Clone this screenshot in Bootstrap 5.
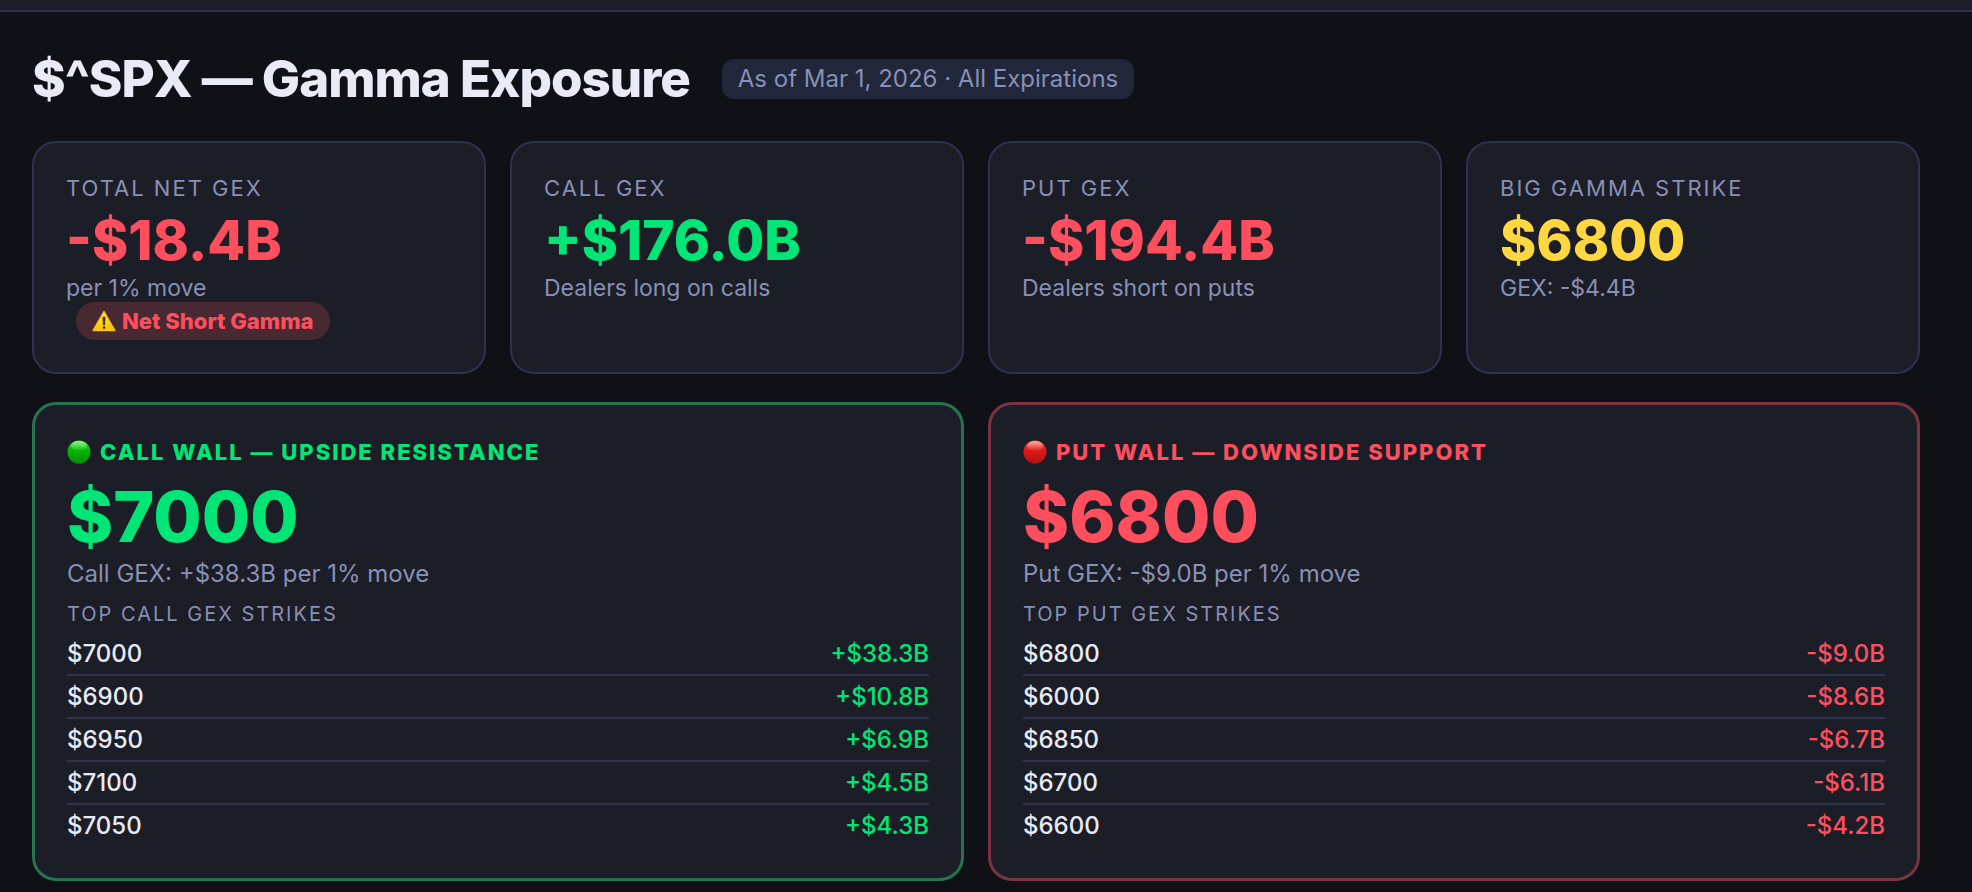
<!DOCTYPE html>
<html lang="en" data-bs-theme="dark">
<head>
<meta charset="utf-8">
<meta name="viewport" content="width=device-width, initial-scale=1">
<title>$^SPX — Gamma Exposure</title>
<link href="https://cdn.jsdelivr.net/npm/bootstrap@5.3.0/dist/css/bootstrap.min.css" rel="stylesheet">
<style>
  :root { --line: #2d3250; --panel: #1c1e27; --muted: #8890b5; --up: #00e676; --down: #ff4f5e; --gold: #ffd740; }
  body { background: #101116; color: #e8eaf6; font-family: Inter, "Liberation Sans", sans-serif; }
  .topbar { height: 12px; background: var(--panel); border-bottom: 2px solid var(--line); }
  .page { padding: 37px 52px 10px 32px; }
  .page-title { font-size: 51px; line-height: 60px; font-weight: 800; letter-spacing: -1px; color: #e8eaf6; }
  .asof { font-size: 24px; line-height: 32px; padding: 4px 16px; border-radius: 12px; background: #22263a; color: var(--muted); }
  .page-head { gap: 32px; margin-bottom: 32px; }
  .panel { background: var(--panel); border: 2px solid var(--line); border-radius: 24px; padding: 32px; height: 100%; }
  .panel-up, .panel-down { border-width: 3px; }
  .panel-up { border-color: #25734f; }
  .panel-down { border-color: #7a3440; }
  .up { color: var(--up); } .down { color: var(--down); } .gold { color: var(--gold); }
  .stat-label { font-size: 22px; line-height: 26px; letter-spacing: 2px; margin-bottom: 5px; color: var(--muted); }
  .stat-value { font-size: 55px; line-height: 68px; font-weight: 800; }
  .stat-note { font-size: 23px; line-height: 28px; color: var(--muted); }
  .pill { display: flex; width: fit-content; align-items: center; gap: 6px; margin-left: 10px; padding: 4px 16px; border-radius: 20px; font-size: 22px; line-height: 30px; font-weight: 800; background: #482932; }
  .walls { margin-top: 4px; }
  .wall-title { display: flex; align-items: center; gap: 9px; font-size: 22px; line-height: 30px; font-weight: 800; letter-spacing: 2px; margin-bottom: 6px; }
  .wall-value { font-size: 70px; line-height: 88px; font-weight: 800; }
  .wall-note { font-size: 24px; line-height: 26px; color: var(--muted); }
  .strikes { width: 100%; font-size: 24px; line-height: 41px; font-weight: 500; border-collapse: collapse; }
  .strikes caption { caption-side: top; padding: 15px 0 7px; font-size: 20px; line-height: 24px; font-weight: 400; letter-spacing: 2px; color: var(--muted); }
  .strikes tr + tr { border-top: 2px solid var(--line); }
  .strikes th, .strikes td { padding: 0; }
  .strikes th { font-weight: 500; }
</style>
</head>
<body>
<header class="topbar"></header>
<main class="page">
  <div class="page-head d-flex flex-wrap align-items-center">
    <h1 class="page-title mb-0">$^SPX — Gamma Exposure</h1>
    <span class="asof">As of Mar 1, 2026 · All Expirations</span>
  </div>

  <div class="row row-cols-1 row-cols-md-2 row-cols-xl-4 g-4">
    <div class="col"><section class="panel">
      <div class="stat-label">TOTAL NET GEX</div>
      <div class="stat-value down">-$18.4B</div>
      <div class="stat-note">per 1% move</div>
      <div class="pill down">
        <svg width="24" height="24" viewBox="0 0 24 24" aria-hidden="true">
          <defs><linearGradient id="warn" x1="0" y1="0" x2="0" y2="1"><stop offset="0" stop-color="#ffe14a"/><stop offset="1" stop-color="#fcc200"/></linearGradient></defs>
          <path d="M12 2.4 23 21.6H1Z" fill="url(#warn)" stroke="#f6c21a" stroke-width="1.2" stroke-linejoin="round"/>
          <path d="M10.9 8.2h2.2l-.5 7.8h-1.2Z" fill="#33290a" stroke="#33290a" stroke-width=".6" stroke-linejoin="round"/>
          <circle cx="12" cy="18.6" r="1.3" fill="#33290a"/>
        </svg>
        <span>Net Short Gamma</span>
      </div>
    </section></div>
    <div class="col"><section class="panel">
      <div class="stat-label">CALL GEX</div>
      <div class="stat-value up">+$176.0B</div>
      <div class="stat-note">Dealers long on calls</div>
    </section></div>
    <div class="col"><section class="panel">
      <div class="stat-label">PUT GEX</div>
      <div class="stat-value down">-$194.4B</div>
      <div class="stat-note">Dealers short on puts</div>
    </section></div>
    <div class="col"><section class="panel">
      <div class="stat-label">BIG GAMMA STRIKE</div>
      <div class="stat-value gold">$6800</div>
      <div class="stat-note">GEX: -$4.4B</div>
    </section></div>
  </div>

  <div class="walls row row-cols-1 row-cols-lg-2 g-4">
    <div class="col"><section class="panel panel-up">
      <div class="wall-title up">
        <svg width="24" height="24" viewBox="0 0 24 24" aria-hidden="true">
          <defs>
            <linearGradient id="gBall" x1="0" y1="0" x2="0" y2="1"><stop offset="0" stop-color="#2bd02b"/><stop offset=".4" stop-color="#06b806"/><stop offset="1" stop-color="#078a07"/></linearGradient>
            <linearGradient id="gShine" x1="0" y1="0" x2="0" y2="1"><stop offset="0" stop-color="#8cf584"/><stop offset="1" stop-color="#8cf584" stop-opacity="0"/></linearGradient>
          </defs>
          <circle cx="12" cy="12" r="11.5" fill="url(#gBall)"/><ellipse cx="12" cy="6" rx="8" ry="5" fill="url(#gShine)"/>
        </svg>
        <span>CALL WALL — UPSIDE RESISTANCE</span>
      </div>
      <div class="wall-value up">$7000</div>
      <div class="wall-note">Call GEX: +$38.3B per 1% move</div>
      <table class="strikes">
        <caption>TOP CALL GEX STRIKES</caption>
        <tbody>
          <tr><th scope="row">$7000</th><td class="up text-end">+$38.3B</td></tr>
          <tr><th scope="row">$6900</th><td class="up text-end">+$10.8B</td></tr>
          <tr><th scope="row">$6950</th><td class="up text-end">+$6.9B</td></tr>
          <tr><th scope="row">$7100</th><td class="up text-end">+$4.5B</td></tr>
          <tr><th scope="row">$7050</th><td class="up text-end">+$4.3B</td></tr>
        </tbody>
      </table>
    </section></div>
    <div class="col"><section class="panel panel-down">
      <div class="wall-title down">
        <svg width="24" height="24" viewBox="0 0 24 24" aria-hidden="true">
          <defs>
            <linearGradient id="rBall" x1="0" y1="0" x2="0" y2="1"><stop offset="0" stop-color="#f04040"/><stop offset=".4" stop-color="#e01b1b"/><stop offset="1" stop-color="#b01212"/></linearGradient>
            <linearGradient id="rShine" x1="0" y1="0" x2="0" y2="1"><stop offset="0" stop-color="#ffa8a0"/><stop offset="1" stop-color="#ffa8a0" stop-opacity="0"/></linearGradient>
          </defs>
          <circle cx="12" cy="12" r="11.5" fill="url(#rBall)"/><ellipse cx="12" cy="6" rx="8" ry="5" fill="url(#rShine)"/>
        </svg>
        <span>PUT WALL — DOWNSIDE SUPPORT</span>
      </div>
      <div class="wall-value down">$6800</div>
      <div class="wall-note">Put GEX: -$9.0B per 1% move</div>
      <table class="strikes">
        <caption>TOP PUT GEX STRIKES</caption>
        <tbody>
          <tr><th scope="row">$6800</th><td class="down text-end">-$9.0B</td></tr>
          <tr><th scope="row">$6000</th><td class="down text-end">-$8.6B</td></tr>
          <tr><th scope="row">$6850</th><td class="down text-end">-$6.7B</td></tr>
          <tr><th scope="row">$6700</th><td class="down text-end">-$6.1B</td></tr>
          <tr><th scope="row">$6600</th><td class="down text-end">-$4.2B</td></tr>
        </tbody>
      </table>
    </section></div>
  </div>
</main>
<script src="https://cdn.jsdelivr.net/npm/bootstrap@5.3.0/dist/js/bootstrap.bundle.min.js"></script>
</body>
</html>
